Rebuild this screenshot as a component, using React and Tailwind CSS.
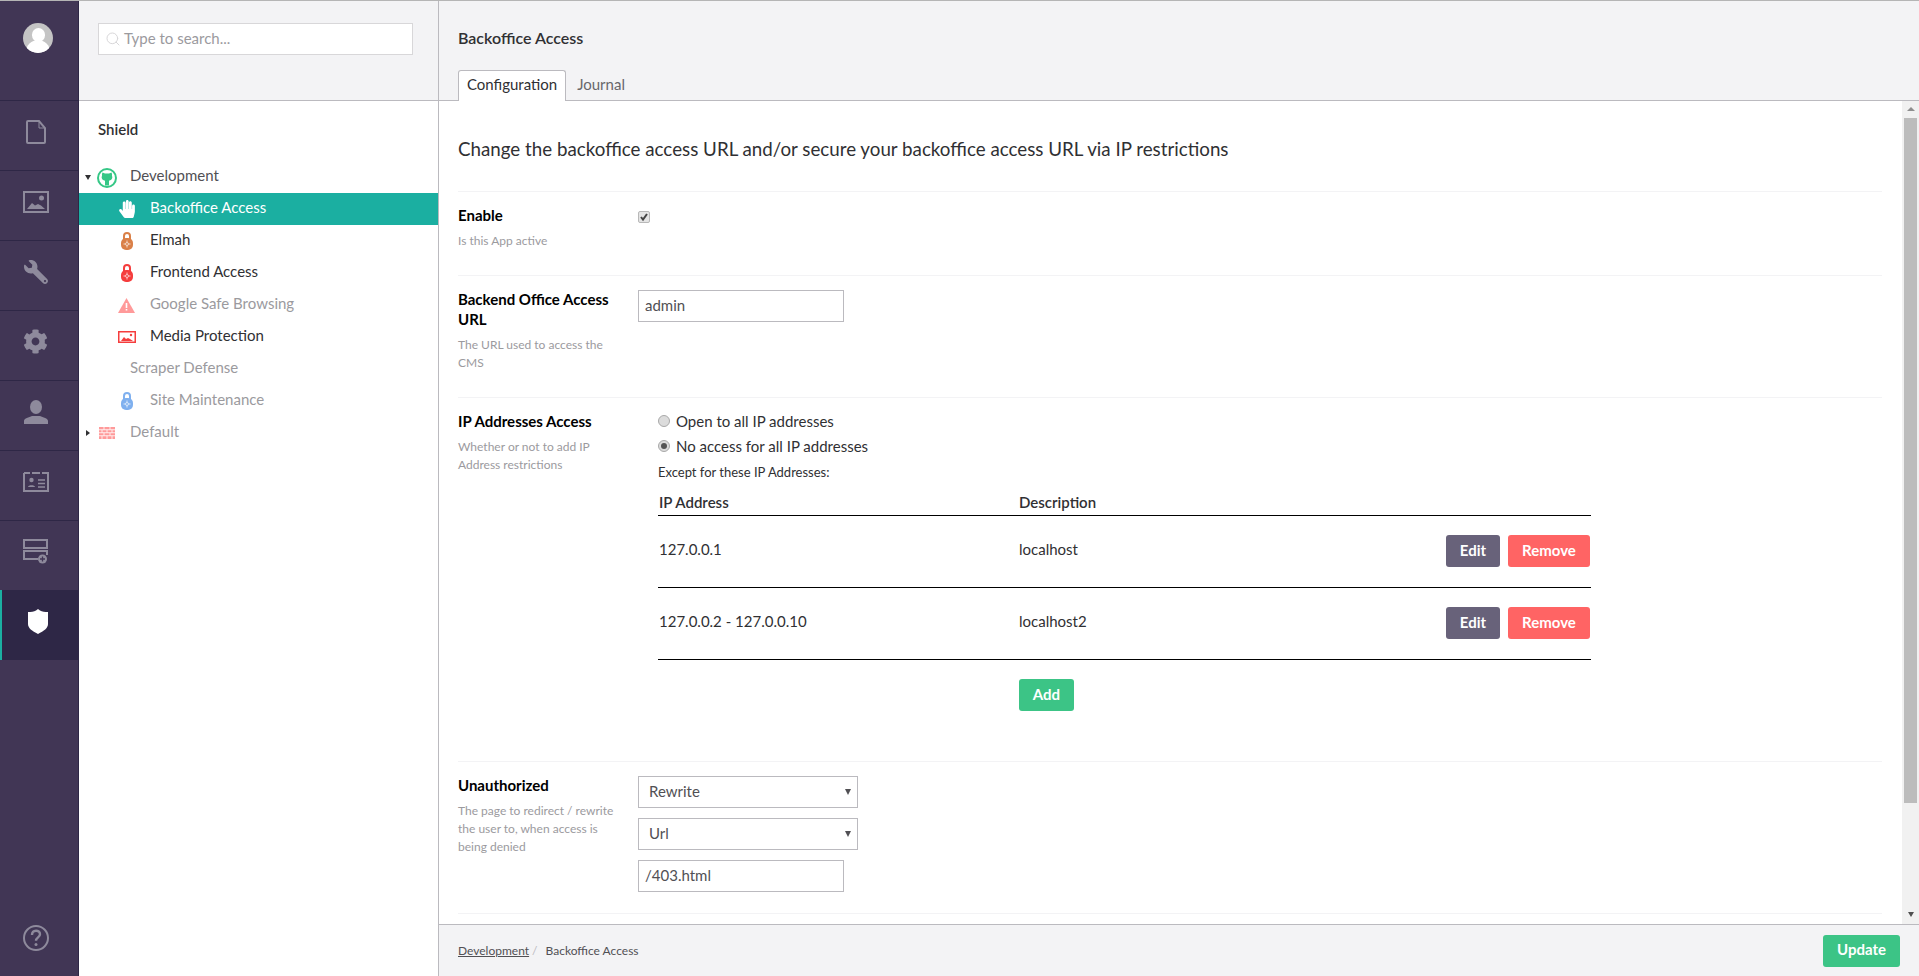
import { FaCog, FaHandPaper, FaWrench } from "react-icons/fa"
import { Search } from "lucide-react"

const DocIcon = () => (
  <svg width="22" height="26" viewBox="0 0 22 26" fill="none" stroke="currentColor" strokeWidth="2">
    <path d="M2 3a1 1 0 0 1 1-1h11l6 7v14a1 1 0 0 1-1 1H3a1 1 0 0 1-1-1z" />
    <path d="M14 3v6h5" strokeWidth="1" />
  </svg>
)

const PictureIcon = () => (
  <svg width="26" height="22" viewBox="0 0 26 22">
    <rect x="1" y="1" width="24" height="20" fill="none" stroke="currentColor" strokeWidth="2" />
    <circle cx="18.5" cy="7" r="2.5" fill="currentColor" />
    <path d="M4 18l5-6 3 2.5 3-1.5 3 1.5 4 3.5z" fill="currentColor" />
  </svg>
)

const UserIcon = () => (
  <svg width="24" height="24" viewBox="0 0 24 24" fill="currentColor">
    <ellipse cx="12" cy="7" rx="6" ry="7" />
    <path d="M0 24v-3c0-3 5-3.500 8-5h8c3 1.500 8 2 8 5v3z" />
  </svg>
)

const CardIcon = () => (
  <svg width="26" height="20" viewBox="0 0 26 20" fill="none" stroke="currentColor">
    <path d="M1 1h6M9 1h8M19 1h6v18H1V1" strokeWidth="2" />
    <circle cx="8.500" cy="8" r="2.200" fill="currentColor" stroke="none" />
    <path d="M5 15c0-2.500 7-2.500 7 0z" fill="currentColor" stroke="none" />
    <path d="M15 8h7M15 11.500h7M15 15h7" strokeWidth="1.600" />
  </svg>
)

const FormsIcon = () => (
  <svg width="25" height="25" viewBox="0 0 25 25" fill="none" stroke="currentColor" strokeWidth="2">
    <rect x="1" y="1" width="23" height="8" />
    <path d="M15 20H1v-8h23v4" />
    <circle cx="19.500" cy="20" r="4.500" fill="currentColor" stroke="none" />
    <path d="M19.500 17.500v5M17 20h5" stroke="#413655" strokeWidth="1.300" />
  </svg>
)

const ShieldIcon = () => (
  <svg width="20" height="25" viewBox="0 0 20 25" fill="white">
    <path d="M10 0l2 1.500c2 1 5 1.500 8 1.500v12c0 4-4 7-10 10C4 22 0 19 0 15V3c3 0 6-.5 8-1.500z" />
  </svg>
)

const HelpIcon = () => (
  <svg width="26" height="26" viewBox="0 0 26 26" fill="none" stroke="currentColor" strokeWidth="2">
    <circle cx="13" cy="13" r="12" />
    <path d="M9 10c0-5.500 8-5.500 8-.8 0 3.300-4 3-4 6.600" strokeWidth="2.400" />
    <circle cx="13" cy="19.500" r="1.500" fill="currentColor" stroke="none" />
  </svg>
)

const GithubRing = () => (
  <svg width="20" height="20" viewBox="0 0 20 20">
    <circle cx="10" cy="10" r="9" fill="white" stroke="#35c786" strokeWidth="2" />
    <path d="M5.500 4.500l2.500 1h4l2.500-1c.6 1.300.7 2.500.4 3.300 1 1.600.4 4.400-2.900 4.900v4.800H8v-4.800c-3.300-.5-3.900-3.300-2.900-4.900-.3-.8-.2-2 .4-3.300z" fill="#35c786" />
  </svg>
)

const LockIcon = ({ color }) => (
  <svg width="12" height="18" viewBox="0 0 12 18">
    <path d="M3 8V4a3 3 0 0 1 6 0v4" fill="none" stroke={color} strokeWidth="2" />
    <rect x="0" y="6" width="12" height="12" rx="5" fill={color} />
    <circle cx="6" cy="12" r="1.500" fill="none" stroke="white" strokeWidth=".7" />
    <path d="M6 8.500v1.500M6 14v1.500M2.500 12H4M8 12h1.500" stroke="white" strokeWidth=".7" />
  </svg>
)

const WarningIcon = () => (
  <svg width="17" height="15" viewBox="0 0 17 15">
    <path d="M8.500 0L17 15H0z" fill="#ff9a9a" />
    <path d="M7.700 5h1.600v5H7.700zM7.700 11h1.600v1.600H7.700z" fill="white" />
  </svg>
)

const MediaIcon = () => (
  <svg width="18" height="12" viewBox="0 0 18 12">
    <rect x=".75" y=".75" width="16.500" height="10.500" fill="white" stroke="#f53d3d" strokeWidth="1.500" />
    <circle cx="13" cy="4" r="1.200" fill="#f53d3d" />
    <path d="M3 10l3-4 2 2 2-1 2 1 3 2z" fill="#f53d3d" />
  </svg>
)

const BrickIcon = () => (
  <svg width="16" height="12" viewBox="0 0 16 12">
    <rect width="16" height="12" fill="#ff9a9a" />
    <path d="M0 2.750h16M0 5.750h16M0 8.750h16M5 0v2.750M11 0v2.750M3 2.750v3M8 2.750v3M13 2.750v3M5 5.750v3M11 5.750v3M3 8.750V12M8 8.750V12M13 8.750V12" stroke="white" strokeWidth=".8" fill="none" />
  </svg>
)

const navItems = [
  { id: "content", icon: <DocIcon /> },
  { id: "media", icon: <PictureIcon /> },
  { id: "settings", icon: <FaWrench size={24} className="-scale-x-100" /> },
  { id: "developer", icon: <FaCog size={25} /> },
  { id: "users", icon: <UserIcon /> },
  { id: "members", icon: <CardIcon /> },
  { id: "forms", icon: <FormsIcon /> },
]

const treeItems = [
  { name: "Backoffice Access", icon: <FaHandPaper size={18} color="white" />, active: true },
  { name: "Elmah", icon: <LockIcon color="#da8048" /> },
  { name: "Frontend Access", icon: <LockIcon color="#f53d3d" /> },
  { name: "Google Safe Browsing", icon: <WarningIcon />, muted: true },
  { name: "Media Protection", icon: <MediaIcon /> },
  { name: "Scraper Defense", muted: true, noIcon: true },
  { name: "Site Maintenance", icon: <LockIcon color="#7fb0ef" />, muted: true },
]

const Caret = ({ open }) => (
  <span className="w-[18px] flex justify-center shrink-0">
    {open
      ? <span className="w-0 h-0 border-x-[3.500px] border-x-transparent border-t-[5px] border-t-[#303033]" />
      : <span className="w-0 h-0 border-y-[3.500px] border-y-transparent border-l-[4px] border-l-[#303033]" />
    }
  </span>
)

const Row = ({ label, desc, height, children }) => (
  <div className={`flex border-t border-[#f3f3f5] pt-[14px] ${height}`}>
    <div className="w-[180px] pr-[20px] shrink-0">
      <div className="leading-[20px] font-bold text-black -mt-[1px]">{label}</div>
      <div className="text-[12px] leading-[18px] text-[#9b9a9e] mt-[7px]">{desc}</div>
    </div>
    <div className="flex-1">{children}</div>
  </div>
)

const Radio = ({ checked }) => (
  <span className="w-[12px] h-[12px] rounded-full border border-[#a9a9a9] bg-[#dcdcdc] flex items-center justify-center shrink-0">
    {checked && <span className="w-[6px] h-[6px] rounded-full bg-[#555555]" />}
  </span>
)

const SelectBox = ({ value }) => (
  <div className="relative w-[220px] h-[32px]">
    <select
      defaultValue={value}
      className="appearance-none w-full h-full border border-[#bbbabf] bg-white pl-[10px] pb-[2px] text-[#515054]">
      <option>{value}</option>
    </select>
    <span className="absolute right-[7px] top-[13px] w-0 h-0 border-x-[3px] border-x-transparent border-t-[6px] border-t-[#515054]" />
  </div>
)

const TextBox = ({ value }) => (
  <input
    readOnly
    value={value}
    className="block w-[206px] h-[32px] border border-[#bbbabf] px-[6px] pb-[2px] text-[#515054] bg-white"
  />
)

const IpRow = ({ ip, description }) => (
  <div className="flex h-[72px] pt-[19px] border-b border-black">
    <div className="w-[361px] pl-[1px] pt-[3px] leading-[22px]">{ip}</div>
    <div className="flex-1 pt-[3px] leading-[22px]">{description}</div>
    <div className="flex gap-[8px] h-[32px] pr-[1px]">
      <button className="w-[54px] rounded-[3px] bg-[#68627a] text-white font-bold pb-[2px]">Edit</button>
      <button className="w-[82px] rounded-[3px] bg-[#ff6464] text-white font-bold pb-[2px]">Remove</button>
    </div>
  </div>
)

const App = () => {
  return (
    <div
      className="h-[976px] w-[1919px] overflow-hidden flex border-t border-[#b5b5b5] text-[15px] text-[#303033]"
      style={{ fontFamily: "Lato, 'Noto Sans', sans-serif" }}>

      {/* section bar */}
      <div className="w-[79px] shrink-0 bg-[#413655] border-r border-[#2e2746] flex flex-col text-[#8e8a9c]">
        <div className="h-[100px] border-b border-[#2e2746] pt-[22px] pl-[23px]">
          <div className="w-[30px] h-[30px] rounded-full bg-[#c4c4c4] overflow-hidden">
            <div className="w-[13px] h-[14px] rounded-full bg-white mx-auto mt-[5px]" />
            <div className="w-[24px] h-[14px] rounded-t-full bg-white mx-auto mt-[-2px]" />
          </div>
        </div>
        {navItems.map((item, i) => (
          <div
            key={item.id}
            className={`flex items-center justify-center pr-[7px] pb-[8px] ${i < 6 ? "h-[70px] border-b border-[#2e2746]" : "h-[69px]"}`}>
            {item.icon}
          </div>
        ))}
        <div className="h-[70px] flex items-center justify-center pr-[5px] pb-[8px] bg-[#2e2746] border-l-[2px] border-[#1bafa1]">
          <ShieldIcon />
        </div>
        <div className="mt-auto h-[76px] pr-[7px] flex justify-center pt-[25px]">
          <HelpIcon />
        </div>
      </div>

      {/* tree */}
      <div className="w-[360px] shrink-0 border-r border-[#bbbabf] flex flex-col bg-white">
        <div className="h-[100px] shrink-0 bg-[#f3f3f5] border-b border-[#bbbabf] px-[19px] pt-[22px]">
          <div className="h-[32px] w-[315px] border border-[#d8d7d9] bg-white flex items-center pl-[6px] gap-[3px]">
            <Search size={16} strokeWidth={1.5} color="#d8d7d9" />
            <span className="text-[#9b9a9e] pb-[2px]">Type to search...</span>
          </div>
        </div>
        <div className="pl-[19px] pt-[18px] pb-[22px] leading-[20px] font-semibold">Shield</div>
        <div className="flex items-center h-[32px] text-[#515054]">
          <Caret open />
          <span className="mr-[13px] mt-[2px]"><GithubRing /></span>
          <span className="pb-[3px]">Development</span>
        </div>
        {treeItems.map((item) => (
          <div
            key={item.name}
            className={`flex items-center h-[32px] ${item.active ? "bg-[#1bafa1] text-white" : item.muted ? "text-[#9b9a9e]" : "text-[#303033]"}`}>
            <span className={`${item.noIcon ? "w-[51px]" : "w-[71px]"} shrink-0 flex justify-center pl-[25px]`}>
              {item.noIcon ? null : <span className="w-[20px] mr-[1px] flex justify-center">{item.icon}</span>}
            </span>
            <span className="pb-[3px]">{item.name}</span>
          </div>
        ))}
        <div className="flex items-center h-[32px] text-[#9b9a9e]">
          <Caret />
          <span className="w-[33px] shrink-0 pl-[2px]"><BrickIcon /></span>
          <span className="pb-[3px]">Default</span>
        </div>
      </div>

      {/* main */}
      <div className="flex-1 min-w-0 flex flex-col">
        <div className="h-[100px] shrink-0 bg-[#f3f3f5] border-b border-[#bbbabf] relative pl-[19px]">
          <div className="pt-[27px] leading-[20px] text-[16px] font-semibold">Backoffice Access</div>
          <div className="absolute left-[19px] bottom-[-1px] flex items-start">
            <div className="h-[31px] px-[8px] pb-[3px] flex items-center bg-white border border-b-0 border-[#bbbabf] rounded-t-[3px]">Configuration</div>
            <div className="h-[31px] pl-[11px] pb-[3px] flex items-center text-[#68676b]">Journal</div>
          </div>
        </div>

        <div className="flex-1 min-h-0 flex">
          <div className="flex-1 min-w-0 pl-[19px] pr-[20px] overflow-hidden">
            <h2 className="text-[18.75px] leading-[28px] pt-[34px] pb-[28px]">
              Change the backoffice access URL and/or secure your backoffice access URL via IP restrictions
            </h2>

            <Row label="Enable" desc="Is this App active" height="h-[84px]">
              <span className="block w-[12px] h-[12px] mt-[5px] rounded-[2px] border border-[#b8b8b8] bg-[#e4e4e4] relative">
                <svg width="10" height="10" viewBox="0 0 10 10" className="absolute left-[0px] top-[0px]">
                  <path d="M2 5l2 2.500L8 2" fill="none" stroke="#444444" strokeWidth="2" />
                </svg>
              </span>
            </Row>

            <Row label="Backend Office Access URL" desc="The URL used to access the CMS" height="h-[122px]">
              <TextBox value="admin" />
            </Row>

            <Row label="IP Addresses Access" desc="Whether or not to add IP Address restrictions" height="h-[364px]">
              <div className="pl-[20px] -mt-[1px]">
                <div className="flex items-center gap-[6px] h-[20px]">
                  <Radio /> Open to all IP addresses
                </div>
                <div className="flex items-center gap-[6px] h-[20px] mt-[5px]">
                  <Radio checked /> No access for all IP addresses
                </div>
                <div className="text-[13px] leading-[20px] mt-[6px]">Except for these IP Addresses:</div>
                <div className="w-[933px]">
                  <div className="flex h-[34px] pt-[9px] border-b border-black font-semibold">
                    <div className="w-[361px] pl-[1px]">IP Address</div>
                    <div>Description</div>
                  </div>
                  <IpRow ip="127.0.0.1" description="localhost" />
                  <IpRow ip="127.0.0.2 - 127.0.0.10" description="localhost2" />
                  <div className="pl-[361px] pt-[19px]">
                    <button className="w-[55px] h-[32px] rounded-[3px] bg-[#3cc486] text-white font-bold pb-[2px]">Add</button>
                  </div>
                </div>
              </div>
            </Row>

            <Row label="Unauthorized" desc="The page to redirect / rewrite the user to, when access is being denied" height="h-[152px]">
              <div className="flex flex-col gap-[10px]">
                <SelectBox value="Rewrite" />
                <SelectBox value="Url" />
                <TextBox value="/403.html" />
              </div>
            </Row>
            <div className="border-t border-[#f3f3f5]" />
          </div>

          {/* scrollbar */}
          <div className="w-[17px] shrink-0 bg-[#f1f1f1] flex flex-col items-center">
            <span className="w-0 h-0 mt-[6px] border-x-[4px] border-x-transparent border-b-[4px] border-b-[#8e8e8e]" />
            <div className="w-[13px] h-[685px] bg-[#bcbcbc] mt-[7px]" />
            <span className="w-0 h-0 mt-auto mb-[7px] border-x-[3px] border-x-transparent border-t-[5px] border-t-[#505050]" />
          </div>
        </div>

        <div className="h-[52px] shrink-0 bg-[#f3f3f5] border-t border-[#bbbabf] flex items-center pl-[19px] pr-[19px] text-[12px] text-[#515054]">
          <span className="underline">Development</span>
          <span className="ml-[3px] mr-[8px] text-[#bbbabf]">/</span>
          <span>Backoffice Access</span>
          <button className="ml-auto w-[77px] h-[32px] rounded-[3px] bg-[#3cc486] text-white font-bold text-[15px] pb-[2px]">Update</button>
        </div>
      </div>
    </div>
  )
}

export default App
